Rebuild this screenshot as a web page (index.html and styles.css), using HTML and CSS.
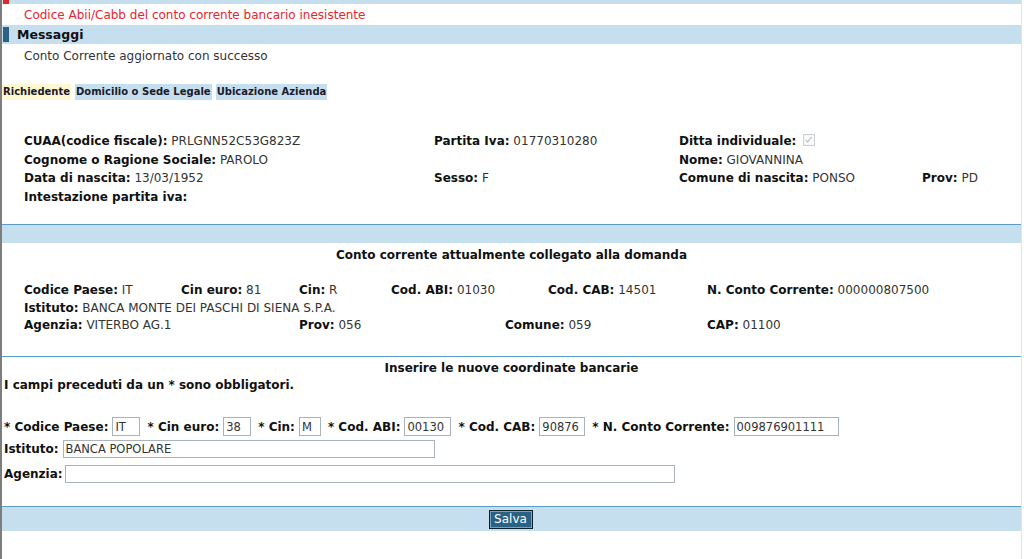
FILE: index.html
```html
<!DOCTYPE html>
<html lang="it">
<head>
<meta charset="utf-8">
<title>Conto corrente</title>
<link rel="stylesheet" href="styles.css">
</head>
<body>
<div class="page">
  <div class="topbar"><span class="mark mark-red"></span></div>
  <div class="error">Codice Abii/Cabb del conto corrente bancario inesistente</div>
  <div class="sect-head"><span class="mark mark-blue"></span><span class="sect-title">Messaggi</span></div>
  <div class="message">Conto Corrente aggiornato con successo</div>

  <div class="tabs">
    <span class="tab tab-active">Richiedente</span>
    <span class="tab">Domicilio o Sede Legale</span>
    <span class="tab">Ubicazione Azienda</span>
  </div>

  <div class="anag">
    <div class="cell"><b>CUAA(codice fiscale):</b> PRLGNN52C53G823Z</div>
    <div class="cell"><b>Partita Iva:</b> 01770310280</div>
    <div class="cell"><b>Ditta individuale:</b> <span class="chk"><svg width="9" height="9" viewBox="0 0 9 9"><path d="M1.5 4.8 L3.6 7 L7.6 1.8" fill="none" stroke="#b8c4cc" stroke-width="1.2"/></svg></span></div>
    <div class="cell"></div>

    <div class="cell"><b>Cognome o Ragione Sociale:</b> PAROLO</div>
    <div class="cell"></div>
    <div class="cell"><b>Nome:</b> GIOVANNINA</div>
    <div class="cell"></div>

    <div class="cell"><b>Data di nascita:</b> 13/03/1952</div>
    <div class="cell"><b>Sesso:</b> F</div>
    <div class="cell"><b>Comune di nascita:</b> PONSO</div>
    <div class="cell"><b>Prov:</b> PD</div>

    <div class="cell"><b>Intestazione partita iva:</b></div>
  </div>

  <div class="bar"></div>

  <div class="center-title t1">Conto corrente attualmente collegato alla domanda</div>
  <div class="cc">
    <div class="cc-row">
      <span class="c w157"><b>Codice Paese:</b> IT</span>
      <span class="c w118"><b>Cin euro:</b> 81</span>
      <span class="c w92"><b>Cin:</b> R</span>
      <span class="c w157"><b>Cod. ABI:</b> 01030</span>
      <span class="c w159"><b>Cod. CAB:</b> 14501</span>
      <span class="c"><b>N. Conto Corrente:</b> 000000807500</span>
    </div>
    <div class="cc-row">
      <span class="c"><b>Istituto:</b> BANCA MONTE DEI PASCHI DI SIENA S.P.A.</span>
    </div>
    <div class="cc-row">
      <span class="c w275"><b>Agenzia:</b> VITERBO AG.1</span>
      <span class="c w206"><b>Prov:</b> 056</span>
      <span class="c w202"><b>Comune:</b> 059</span>
      <span class="c"><b>CAP:</b> 01100</span>
    </div>
  </div>

  <div class="sep"></div>
  <div class="center-title t2">Inserire le nuove coordinate bancarie</div>
  <div class="note">I campi preceduti da un * sono obbligatori.</div>

  <div class="form-row r1">
    <label>* Codice Paese:</label><input class="in w28" value="IT">
    <label>* Cin euro:</label><input class="in w28" value="38">
    <label>* Cin:</label><input class="in w22" value="M">
    <label>* Cod. ABI:</label><input class="in w47" value="00130">
    <label>* Cod. CAB:</label><input class="in w46" value="90876">
    <label>* N. Conto Corrente:</label><input class="in w105" value="009876901111">
  </div>
  <div class="form-row r2">
    <label>Istituto:</label><input class="in w372" value="BANCA POPOLARE">
  </div>
  <div class="form-row r3">
    <label class="tight">Agenzia:</label><input class="in w610" value="">
  </div>

  <div class="footbar"><button class="btn">Salva</button></div>
</div>
</body>
</html>
```
FILE: styles.css
```css
html, body {
  margin: 0;
  padding: 0;
  background: #fff;
}
body {
  font-family: "DejaVu Sans", Verdana, sans-serif;
  font-size: 12px;
  color: #333;
}
.page {
  border-left: 2px solid #7d7d7d;
  border-right: 1px solid #e4e4e4;
  min-height: 559px;
  box-sizing: border-box;
  width: 1022px;
}
b { color: #111; font-weight: bold; }

.topbar {
  height: 4px;
  background: #c6dfee;
  display: flex;
}
.mark { display: block; width: 6px; margin-left: 1px; }
.mark-red { height: 4px; background: #e0282a; }
.mark-blue { height: 15px; background: #2a6185; }

.error {
  height: 21px;
  line-height: 23px;
  padding-left: 22px;
  color: #e8242c;
}
.sect-head {
  height: 19px;
  background: #c6dfee;
  display: flex;
  align-items: center;
}
.sect-title {
  margin-left: 8px;
  font-weight: bold;
  font-size: 12.5px;
  color: #111;
}
.message {
  height: 22px;
  line-height: 24px;
  padding-left: 22px;
}

.tabs {
  margin-top: 18px;
  height: 16px;
  display: flex;
  gap: 4px;
}
.tab {
  display: block;
  background: #c6dfee;
  font-size: 10px;
  font-weight: bold;
  color: #1a1a2a;
  line-height: 16px;
  padding: 0 1px;
}
.tab-active { background: #fdf7d2; }

.anag {
  margin-top: 32px;
  padding-left: 22px;
  display: grid;
  grid-template-columns: 410px 245px 243px auto;
  grid-auto-rows: 18.7px;
  height: 92px;
}
.cell {
  line-height: 18.7px;
  white-space: nowrap;
}
.chk {
  display: inline-block;
  width: 10px;
  height: 10px;
  border: 1px solid #c8ced3;
  vertical-align: -1px;
  margin-left: 3px;
  background: #fafafa;
  position: relative;
}
.chk svg { position: absolute; left: 0; top: 0; }

.bar {
  height: 18px;
  background: #c6dfee;
  border-top: 1px solid #5b9dc2;
}
.center-title {
  text-align: center;
  font-weight: bold;
  color: #111;
}
.t1 { height: 24px; line-height: 25px; }

.cc {
  margin-top: 15px;
  padding-left: 22px;
}
.cc-row {
  display: flex;
  height: 17.7px;
  line-height: 17.7px;
  white-space: nowrap;
}
.c { display: block; }
.w157 { width: 157px; }
.w118 { width: 118px; }
.w92 { width: 92px; }
.w159 { width: 159px; }
.w275 { width: 275px; }
.w206 { width: 206px; }
.w202 { width: 202px; }

.sep {
  margin-top: 21px;
  border-top: 1px solid #5aa2c8;
}
.t2 { height: 19px; line-height: 22px; }
.note {
  padding-left: 2px;
  font-weight: bold;
  color: #111;
  height: 18px;
  line-height: 18px;
}

.form-row {
  display: flex;
  align-items: center;
  padding-left: 2px;
  white-space: nowrap;
}
.form-row label {
  font-weight: bold;
  color: #111;
  font-size: 12px;
  margin-right: 4px;
}
.form-row label.tight { margin-right: 2px; }
.form-row input + label { margin-left: 7px; }
.r1 { margin-top: 23px; height: 19px; }
.r2 { margin-top: 4px; height: 18px; }
.r3 { margin-top: 7px; height: 18px; }

.in {
  box-sizing: border-box;
  height: 19px;
  border: 1px solid #a9b3bd;
  font-family: "DejaVu Sans", Verdana, sans-serif;
  font-size: 11.5px;
  color: #333;
  padding: 0 2px;
  margin: 0;
  background: #fff;
}
.r2 .in, .r3 .in { height: 18px; }
.w28 { width: 28px; }
.w22 { width: 22px; }
.w47 { width: 47px; }
.w46 { width: 46px; }
.w105 { width: 105px; }
.w372 { width: 372px; }
.w610 { width: 610px; }

.footbar {
  margin-top: 23px;
  height: 24px;
  background: #c6dfee;
  border-top: 1px solid #5b9dc2;
  display: flex;
  justify-content: center;
  align-items: center;
}
.btn {
  height: 19px;
  width: 44px;
  padding: 0;
  background: #2a6185;
  color: #fff;
  border: 1px solid #0e1e2a;
  box-shadow: inset 0 0 0 1px #7aa3bf;
  font-family: "DejaVu Sans", Verdana, sans-serif;
  font-size: 12px;
  margin-left: -2px;
}
```
